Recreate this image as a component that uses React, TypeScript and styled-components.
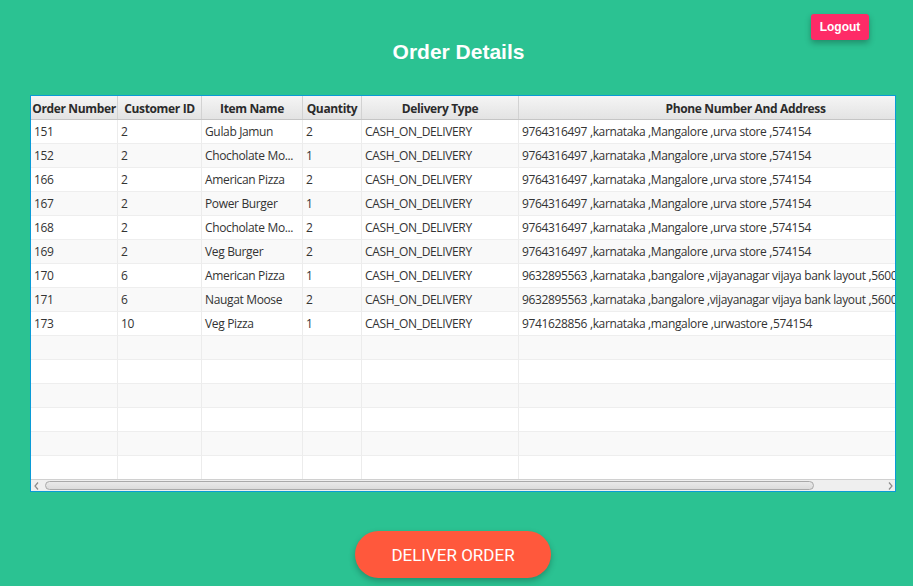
import React from "react";
import styled, { createGlobalStyle } from "styled-components";

const Global = createGlobalStyle`
  html, body { margin: 0; padding: 0; }
  body { background: #2bc292; width: 913px; height: 586px; overflow: hidden; }
`;

const Page = styled.div`
  width: 913px;
  height: 586px;
  display: flex;
  flex-direction: column;
  background: #2bc292;
  font-family: "Open Sans", sans-serif;
`;

const Header = styled.header`
  height: 95px;
  display: grid;
  grid-template-columns: 1fr auto 1fr;
  align-items: start;
`;

const Title = styled.h1`
  grid-column: 2;
  margin: 40px 0 0 4px;
  font-family: "Liberation Sans", Arial, sans-serif;
  font-weight: bold;
  font-size: 21px;
  line-height: 24px;
  color: #ffffff;
`;

const LogoutButton = styled.button`
  grid-column: 3;
  justify-self: end;
  margin: 14px 44px 0 0;
  width: 58px;
  height: 26px;
  border: none;
  border-radius: 3px;
  background: #fe2b67;
  color: #fff;
  font-family: "Liberation Sans", Arial, sans-serif;
  font-weight: bold;
  font-size: 12px;
  box-shadow: 0 3px 6px rgba(0, 0, 0, 0.28);
  padding: 0;
`;

const TableFrame = styled.div`
  margin-left: 30px;
  width: 866px;
  height: 397px;
  box-sizing: border-box;
  border: 1px solid #0a9bd6;
  box-shadow: inset 1px 0 0 #5fbfe6;
  background: #fff;
  display: flex;
  flex-direction: column;
  overflow: hidden;
`;

const Viewport = styled.div`
  flex: 1;
  overflow: hidden;
`;

const cols = "87px 84px 101px 59px 157px 454px";

const HeadRow = styled.div`
  display: grid;
  grid-template-columns: ${cols};
  height: 24px;
  box-sizing: border-box;
  background: linear-gradient(#f5f5f5, #e3e3e3);
  border-bottom: 1px solid #c5c5c5;
`;

const HeadCell = styled.div`
  display: flex;
  align-items: center;
  justify-content: center;
  border-right: 1px solid #d2d2d2;
  font-weight: 700;
  font-size: 12px;
  letter-spacing: -0.35px;
  color: #2b2b2b;
  white-space: nowrap;
  overflow: hidden;
  padding-top: 1px;
`;

const Row = styled.div<{ $alt: boolean }>`
  display: grid;
  grid-template-columns: ${cols};
  height: 24px;
  background: ${(p) => (p.$alt ? "#f9f9f9" : "#ffffff")};
`;

const Cell = styled.div`
  display: flex;
  align-items: center;
  padding: 0 3px;
  box-sizing: border-box;
  border-right: 1px solid #ececec;
  border-bottom: 1px solid #eeeeee;
  font-size: 12px;
  letter-spacing: -0.35px;
  color: #333333;
  white-space: nowrap;
  overflow: hidden;
`;

const ScrollBar = styled.div`
  height: 11px;
  display: flex;
  align-items: center;
  background: #efefef;
  border-top: 1px solid #d0d0d0;
  padding: 0 2px;
  gap: 3px;
`;

const Arrow = styled.div`
  width: 6px;
  display: flex;
  align-items: center;
  justify-content: center;
`;

const Track = styled.div`
  flex: 1;
  display: flex;
  height: 9px;
  margin-left: 3px;
  margin-right: 3px;
`;

const Thumb = styled.div`
  height: 100%;
  box-sizing: border-box;
  border: 1px solid #a9a9a9;
  border-radius: 5px;
  background: linear-gradient(#e9e9e9, #dcdcdc);
`;

const Footer = styled.div`
  flex: 1;
  display: flex;
  justify-content: center;
  padding-top: 39px;
  padding-right: 7px;
`;

const DeliverButton = styled.button`
  width: 196px;
  height: 47px;
  border: none;
  border-radius: 24px;
  background: #ff583c;
  color: #fff;
  font-family: Roboto, sans-serif;
  font-size: 17px;
  font-weight: 400;
  box-shadow: 0 3px 6px rgba(0, 0, 0, 0.25);
`;

const headers = [
  "Order Number",
  "Customer ID",
  "Item Name",
  "Quantity",
  "Delivery Type",
  "Phone Number And Address",
];

const addrA = "9764316497 ,karnataka ,Mangalore ,urva store ,574154";
const addrB = "9632895563 ,karnataka ,bangalore ,vijayanagar vijaya bank layout ,560040";
const addrC = "9741628856 ,karnataka ,mangalore ,urwastore ,574154";
const cod = "CASH_ON_DELIVERY";

const data: string[][] = [
  ["151", "2", "Gulab Jamun", "2", cod, addrA],
  ["152", "2", "Chocholate Mo...", "1", cod, addrA],
  ["166", "2", "American Pizza", "2", cod, addrA],
  ["167", "2", "Power Burger", "1", cod, addrA],
  ["168", "2", "Chocholate Mo...", "2", cod, addrA],
  ["169", "2", "Veg Burger", "2", cod, addrA],
  ["170", "6", "American Pizza", "1", cod, addrB],
  ["171", "6", "Naugat Moose", "2", cod, addrB],
  ["173", "10", "Veg Pizza", "1", cod, addrC],
];

const rows = [...data, ...Array.from({ length: 6 }, () => ["", "", "", "", "", ""])];

const Chevron = ({ dir }: { dir: "l" | "r" }) => (
  <svg width="5" height="8" viewBox="0 0 5 8">
    <path
      d={dir === "l" ? "M4 0.5 L1 4 L4 7.5" : "M1 0.5 L4 4 L1 7.5"}
      fill="none"
      stroke="#8a8a8a"
      strokeWidth="1.2"
    />
  </svg>
);

export default function App() {
  return (
    <Page>
      <Global />
      <Header>
        <Title>Order Details</Title>
        <LogoutButton>Logout</LogoutButton>
      </Header>
      <TableFrame>
        <Viewport>
          <HeadRow>
            {headers.map((h) => (
              <HeadCell key={h}>{h}</HeadCell>
            ))}
          </HeadRow>
          {rows.map((r, i) => (
            <Row key={i} $alt={i % 2 === 1}>
              {r.map((c, j) => (
                <Cell key={j}>{c}</Cell>
              ))}
            </Row>
          ))}
        </Viewport>
        <ScrollBar>
          <Arrow>
            <Chevron dir="l" />
          </Arrow>
          <Track>
            <Thumb style={{ width: "92%" }} />
          </Track>
          <Arrow>
            <Chevron dir="r" />
          </Arrow>
        </ScrollBar>
      </TableFrame>
      <Footer>
        <DeliverButton>DELIVER ORDER</DeliverButton>
      </Footer>
    </Page>
  );
}
